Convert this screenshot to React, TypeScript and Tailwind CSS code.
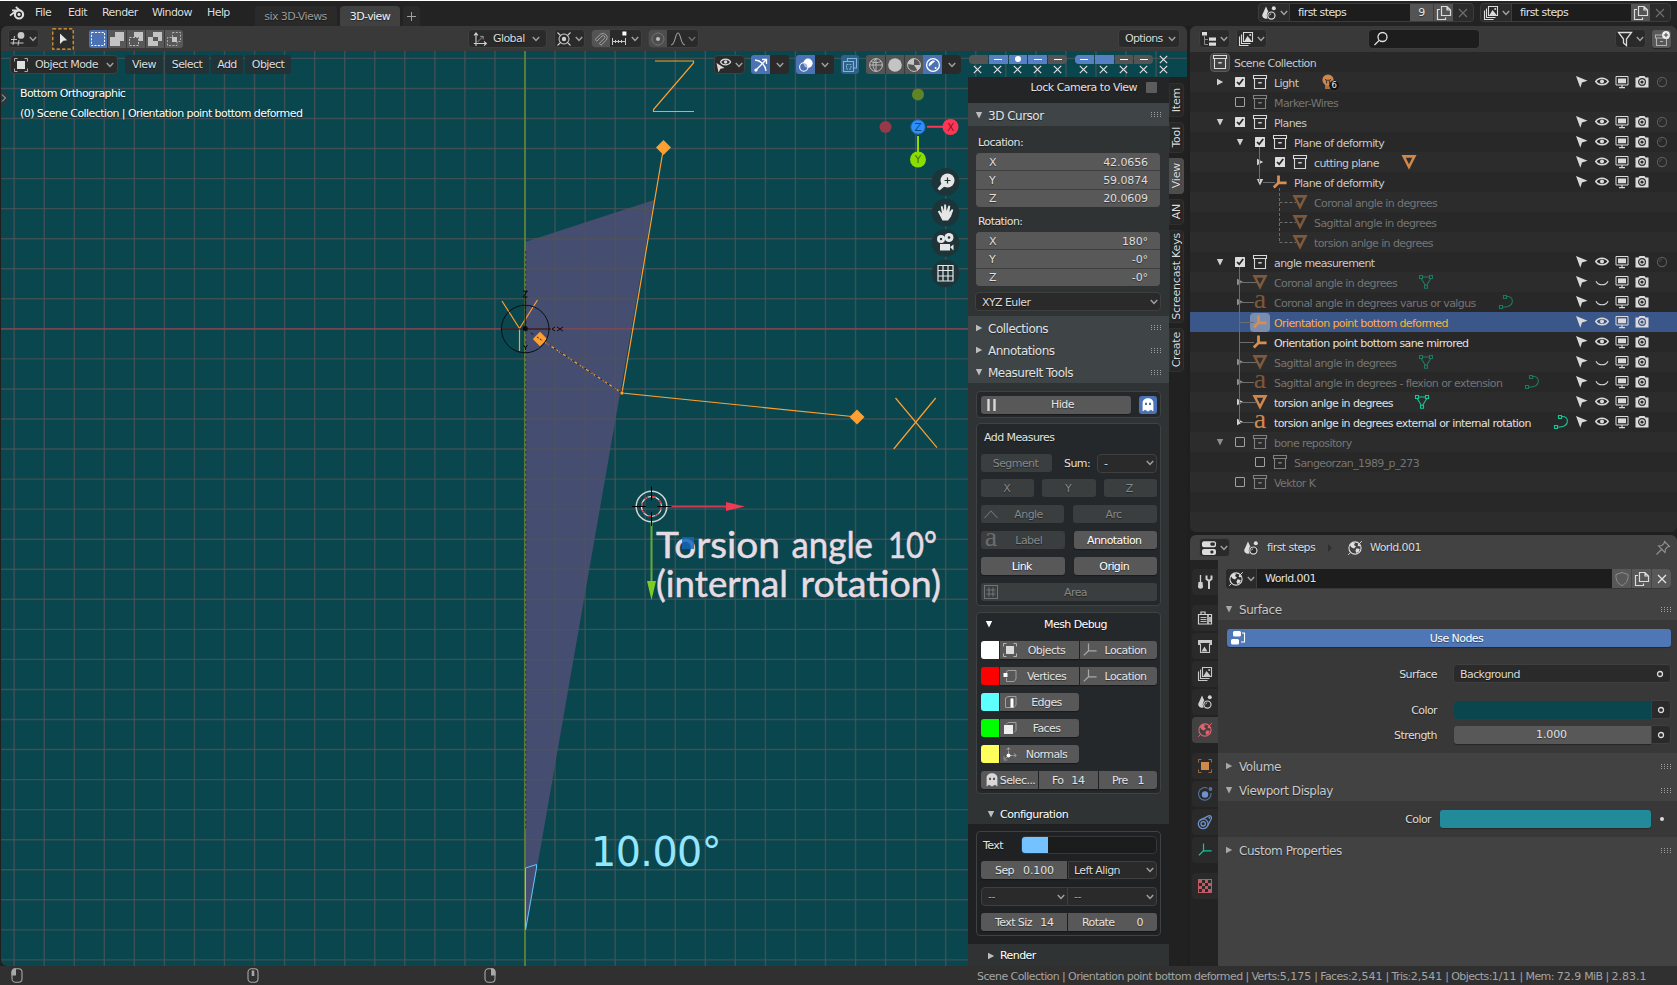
import React from "react";

type P = { children?: React.ReactNode; className?: string };

const SH = "[text-shadow:0_1px_1px_rgba(0,0,0,0.45)]";

const T = ({ children, className = "" }: P) => (
  <span className={`whitespace-pre pt-[2px] ${SH} ${className}`}>{children}</span>
);

/* ---------- icons ---------- */
type IP = { className?: string; children?: React.ReactNode; s?: number };
const Svg = ({ className = "", children, s = 16 }: IP) => (
  <svg width={s} height={s} viewBox="0 0 16 16" fill="none" stroke="currentColor" className={`shrink-0 ${className}`}>
    {children}
  </svg>
);
const Chev = ({ className = "text-[#a0a0a0]" }: IP) => (
  <svg width="8" height="6" viewBox="0 0 8 6" fill="none" stroke="currentColor" strokeWidth="1.5" className={`shrink-0 ${className}`}>
    <path d="M0.8 1L4 4.4L7.2 1" />
  </svg>
);
const Tri = ({ open = false, className = "text-[#bdbdbd]" }: { open?: boolean; className?: string }) => (
  <svg width="8" height="8" viewBox="0 0 8 8" fill="currentColor" className={`shrink-0 ${className}`}>
    {open ? <path d="M0.8 1H7.2L4 7.4Z" /> : <path d="M1 0.8V7.2L7.2 4Z" />}
  </svg>
);
const Collection = ({ className = "" }: IP) => (
  <Svg className={className}>
    <path d="M1.5 1.5H14.5V4.5H1.5ZM2.5 4.5V14.5H13.5V4.5" strokeWidth="1.1" />
    <path d="M6.3 8.8H9.7" strokeWidth="1.5" />
  </Svg>
);
const Cursor = ({ className = "" }: IP) => (
  <Svg className={className}><path d="M2 2L13.6 6.8L8 8.4L6.3 13.8Z" fill="currentColor" stroke="none" /></Svg>
);
const Eye = () => (
  <Svg>
    <path d="M1.8 7.5C4.5 3.2 11.5 3.2 14.2 7.5C11.5 11.8 4.5 11.8 1.8 7.5Z" strokeWidth="1.5" />
    <circle cx="8" cy="7.5" r="2" fill="currentColor" stroke="none" />
  </Svg>
);
const EyeClosed = () => (
  <Svg><path d="M2 7.2C4.5 12 11.5 12 14 7.2" strokeWidth="1.1" /></Svg>
);
const Monitor = () => (
  <Svg>
    <path d="M2 2.5H14V11H2Z" strokeWidth="1" />
    <path d="M4 4.4H12V9.2H4Z" fill="currentColor" stroke="none" />
    <path d="M8 11V13.4M5 13.6H11" strokeWidth="1.2" />
  </Svg>
);
const Camera = ({ hole = "#2b2b2b" }: { hole?: string }) => (
  <Svg>
    <path d="M1.5 3.5H4.5L5.5 2H10.5L11.5 3.5H14.5V13.5H1.5Z" fill="currentColor" stroke="none" />
    <circle cx="8" cy="8" r="3.4" stroke={hole} strokeWidth="1.2" fill="none" />
    <circle cx="8" cy="8" r="1.6" fill={hole} stroke="none" />
  </Svg>
);
const Ball = () => (
  <Svg className="text-[#5c5c5c]"><circle cx="8" cy="8" r="4.6" strokeWidth="1.1" /><path d="M5.6 8A2.4 2.4 0 0 1 8 5.6" strokeWidth="0.8" /></Svg>
);
const Check = ({ on = true }: { on?: boolean }) => (
  <Svg className={on ? "text-[#dcdcdc]" : "text-[#a2a2a2]"}>
    {on ? (
      <>
        <rect x="3" y="3" width="10" height="10" rx="0.6" fill="currentColor" stroke="none" />
        <path d="M5 8L7.2 10.2L11.2 5" stroke="#222" strokeWidth="1.7" />
      </>
    ) : (
      <rect x="3.5" y="3.5" width="9" height="9" rx="0.5" />
    )}
  </Svg>
);
const Axes = ({ className = "", w = 2.3 }: { className?: string; w?: number }) => (
  <Svg className={className}><path d="M6.5 1.5V8.8H14.6M6.5 8.8L1.8 13.4" strokeWidth={w} /></Svg>
);
const MeshObj = ({ className = "" }: IP) => (
  <Svg className={className}><path d="M2.6 2.4H13.4L8 13Z" strokeWidth="2.6" /></Svg>
);
const FontObj = ({ className = "" }: IP) => (
  <svg width="16" height="16" viewBox="0 0 16 16" className={`shrink-0 ${className}`}>
    <text x="8" y="14.3" textAnchor="middle" fill="currentColor" fontSize="28" fontFamily="Liberation Serif, serif" letterSpacing="0">a</text>
  </svg>
);
const MeshData = ({ className = "" }: IP) => (
  <Svg className={className}>
    <path d="M4 3H12M3 4.2L7.2 11M13 4.2L8.8 11" strokeWidth="1.1" />
    <path d="M1.5 1.5H4.5V4.5H1.5ZM11.5 1.5H14.5V4.5H11.5ZM6.5 11.2H9.5V14.2H6.5Z" strokeWidth="1.1" />
  </Svg>
);
const CurveData = ({ className = "" }: IP) => (
  <Svg className={className}>
    <path d="M5.5 1.5H8.5V4.5H5.5ZM1.5 11.5H4.5V14.5H1.5ZM8.5 2.5C12.5 2.1 14.4 4.500 14.400 7.100C14.400 10.600 12 13.300 4.800 13.300" strokeWidth="1.1" />
  </Svg>
);
const Bulb = () => (
  <svg width="20" height="16" viewBox="0 0 20 16" className="shrink-0">
    <circle cx="8" cy="6" r="5.6" fill="#d0874a" />
    <path d="M5.2 5L6.6 7V9.5M10.8 5L9.4 7V9.5M6.5 6.2H9.5" stroke="#333" strokeWidth="1" fill="none" />
    <path d="M5 12H11M5 14H10.5" stroke="#d0874a" strokeWidth="1.3" />
    <circle cx="14" cy="11.3" r="4.8" fill="#111" />
    <text x="14" y="14.4" textAnchor="middle" fontSize="8.5" fill="#eee" fontFamily="DejaVu Sans, sans-serif">6</text>
  </svg>
);
const SceneIcon = ({ className = "" }: IP) => (
  <Svg className={className}>
    <path d="M5 1.5L8.5 9.5C8.5 12 7 13.8 5 13.8C3 13.8 1.2 12.6 1.2 10Z" fill="currentColor" stroke="none" />
    <circle cx="10.4" cy="10.6" r="4.6" fill="#2b2b2b" stroke="none" />
    <circle cx="10.4" cy="10.6" r="3.6" strokeWidth="1.2" />
    <circle cx="12.8" cy="3.2" r="2" fill="currentColor" stroke="none" />
    <path d="M8.6 10.4A2 2 0 0 1 10.2 8.7" strokeWidth="0.8" />
  </Svg>
);
const LayersPic = ({ className = "" }: IP) => (
  <Svg className={className}>
    <path d="M5.5 1.5H14.5V10.5H5.5Z" strokeWidth="1.1" />
    <path d="M6.5 10L9.5 5L12 8L13.5 10Z" fill="currentColor" stroke="none" />
    <circle cx="12.2" cy="4" r="1" fill="currentColor" stroke="none" />
    <path d="M3.5 3.5V12.5H12.5M1.5 5.5V14.5H10.5" strokeWidth="1.1" />
  </Svg>
);
const Copy = ({ className = "text-[#dcdcdc]" }: IP) => (
  <Svg className={className}><path d="M5.5 1.5H11L14.5 5V10.5H5.5ZM11 1.5V5H14.5M4 4.5H1.5V14.5H9.5V12.500" strokeWidth="1.2" /></Svg>
);
const Cross = ({ className = "" }: IP) => (
  <Svg className={className}><path d="M4 4L12 12M12 4L4 12" strokeWidth="1.2" /></Svg>
);
const World = ({ className = "" }: IP) => (
  <Svg className={className}>
    <circle cx="8" cy="8" r="6.1" strokeWidth="1.1" />
    <path d="M2.8 5C4 3 6 2.4 8 3L7 5L9 6.4L7 8.6L4.6 7.4ZM9.6 8.2L12.8 9L11.6 12L9.4 13L8.4 10.4ZM11.4 3.6L13.4 5.6L12 6.6L10.6 5.4Z" fill="currentColor" stroke="none" />
    <path d="M12.2 3.8L14.8 1.2M1.2 14.8L3.4 12.6" strokeWidth="1" />
  </Svg>
);
const TreeIcon = () => (
  <Svg className="text-[#dcdcdc]">
    <path d="M1 1H6V4.6H1Z" fill="currentColor" stroke="none" />
    <path d="M3.5 5V13.5H7M3.5 8.5H7" strokeWidth="1" stroke="#8a8a8a" />
    <path d="M8 6.6H15V9.8H8ZM8 11.6H15V14.8H8Z" fill="currentColor" stroke="none" />
  </Svg>
);
const PropsIcon = () => (
  <Svg className="text-[#dcdcdc]">
    <rect x="1" y="1.2" width="14" height="6" rx="2" fill="currentColor" stroke="none" />
    <rect x="1" y="9" width="14" height="6" rx="2" fill="currentColor" stroke="none" />
    <rect x="9.4" y="2.6" width="4.4" height="3.2" rx="1" fill="#2b2b2b" stroke="none" />
    <rect x="9.4" y="10.4" width="3" height="3.2" rx="1" fill="#2b2b2b" stroke="none" />
  </Svg>
);
const ObjMode = ({ className = "text-[#dcdcdc]" }: IP) => (
  <Svg className={className}>
    <path d="M4 4H12V12H4Z" fill="currentColor" stroke="none" />
    <path d="M1.5 4.5V1.5H4.5M11.5 1.5H14.5V4.5M14.5 11.5V14.5H11.5M4.5 14.5H1.5V11.5" strokeWidth="1" opacity="0.7" />
  </Svg>
);
const Ghost = ({ className = "text-white", eye = "#4a70ae" }: { className?: string; eye?: string }) => (
  <Svg className={className}>
    <path d="M2.6 14.6V5.8C2.6 3 5 1.2 8 1.2S13.4 3 13.4 5.8V14.6L11 12.8L8 14.6L5 12.8Z" fill="currentColor" stroke="none" />
    <path d="M5 5.8H7V8H5ZM9 5.8H11V8H9Z" fill={eye} stroke="none" />
  </Svg>
);

/* ---------- small controls ---------- */
const Btn = ({ children, className = "" }: P) => (
  <div className={`flex h-[18px] items-center justify-center rounded-[3px] bg-[#585858] text-[#e3e3e3] shadow-[0_1px_1px_rgba(0,0,0,0.35)] ${className}`}>{children}</div>
);
const Dark = ({ children, className = "" }: P) => (
  <div className={`flex h-[19px] items-center rounded-[4px] border border-[#3f3f3f] bg-[#2a2a2a] text-[#dadada] ${className}`}>{children}</div>
);
const Grip = () => (
  <div className="mr-[8px] ml-auto grid grid-cols-4 gap-x-[2px] gap-y-px">
    {Array.from({ length: 12 }).map((_, i) => (
      <div key={i} className="size-px bg-[#a0a0a0]" />
    ))}
  </div>
);

/* ---------- top bar ---------- */
const IdBlock = ({ icon, users }: { icon: React.ReactNode; users?: string }) => (
  <div className="flex h-[19px] w-full items-stretch overflow-hidden rounded-[4px] border border-[#3d3d3d] bg-[#2b2b2b]">
    <div className="flex w-[31px] items-center justify-center gap-[3px] border-r border-[#3d3d3d] text-[#dcdcdc]">{icon}<Chev /></div>
    <div className="flex flex-1 items-center bg-[#1d1d1d] pl-[8px] text-[#e3e3e3]"><T>first steps</T></div>
    {users && <div className="flex w-[24px] items-center justify-center border-r border-[#3d3d3d] bg-[#545454] text-[#e3e3e3]"><T>{users}</T></div>}
    <div className="flex w-[19px] items-center justify-center bg-[#545454]"><Copy /></div>
    <div className="flex w-[20px] items-center justify-center"><Cross className="text-[#6d6d6d]" /></div>
  </div>
);

const TopBar = () => (
  <div className="flex h-[26px] border-t border-white bg-[#232323] pr-[6px] text-[#dedede]">
    <div className="flex h-[23px] items-center">
      <svg width="16" height="14" viewBox="0 0 16 14" fill="none" className="ml-[9px] text-[#dedede]">
        <path d="M1 9.6L7.8 4.2M3 4.4H9M6.8 1L11 4.4" stroke="currentColor" strokeWidth="1.8" />
        <circle cx="10" cy="8.4" r="4.1" stroke="currentColor" strokeWidth="2.2" />
        <circle cx="10" cy="8.4" r="1.6" fill="currentColor" />
      </svg>
      <T className="ml-[10px] w-[33px]">File</T>
      <T className="w-[34px]">Edit</T>
      <T className="w-[50px]">Render</T>
      <T className="w-[55px]">Window</T>
      <T className="w-[48px]">Help</T>
    </div>
    <div className="flex items-end gap-[3px]">
      <div className="flex h-[20px] w-[82px] items-center justify-center rounded-t-[4px] bg-[#2a2a2a] text-[#989898]"><T className="pr-[1px]">six 3D-Views</T></div>
      <div className="flex h-[20px] w-[60px] items-center justify-center rounded-t-[4px] bg-[#414141] text-[#f0f0f0]"><T>3D-view</T></div>
      <div className="flex h-[20px] w-[17px] items-center justify-center rounded-t-[4px] bg-[#2a2a2a] text-[#a0a0a0]">
        <svg width="9" height="9" viewBox="0 0 9 9" stroke="currentColor"><path d="M4.5 0V9M0 4.5H9" /></svg>
      </div>
    </div>
    <div className="ml-auto flex gap-[6px] pt-[2px]">
      <div className="flex w-[216px]"><IdBlock icon={<SceneIcon />} users="9" /></div>
      <div className="flex w-[191px]"><IdBlock icon={<LayersPic />} /></div>
    </div>
  </div>
);

/* ---------- viewport headers ---------- */
const ToolHeader = () => (
  <div className="flex h-[25px] items-center rounded-t-[6px] bg-[#393939] text-[#dadada]">
    <Dark className="ml-[7px] w-[31px] justify-center gap-[3px]">
      <Svg className="text-[#c8c8c8]">
        <path d="M4.5 5L3 14M9 9L8 14.5M1 8.5H7M0.5 12H13.5" strokeWidth="1" />
        <circle cx="11" cy="4.4" r="3.4" fill="currentColor" stroke="none" />
      </Svg>
      <Chev />
    </Dark>
    <svg width="22" height="22" viewBox="0 0 22 22" className="ml-[13px]">
      <rect x="0.8" y="0.8" width="20.4" height="20.4" fill="#2b2b2b" stroke="#f0a030" strokeWidth="1.2" strokeDasharray="3.4 2" />
      <path d="M8 5.5L15.2 12.2L11.3 12.7L8 16Z" fill="#e6e6e6" />
    </svg>
    <div className="ml-[15px] flex h-[18px] w-[94px] overflow-hidden rounded-[3px] bg-[#585858]">
      {[0, 1, 2, 3, 4].map((i) => (
        <div key={i} className={`flex flex-1 items-center justify-center ${i === 0 ? "bg-[#4a72b4]" : "border-l border-[#3a3a3a]"}`}>
          <Svg className="text-[#c4c4c4]">
            {i === 0 && <rect x="1.5" y="1.5" width="13" height="13" stroke="#fff" strokeDasharray="2 1.4" />}
            {i === 1 && <path d="M6 1H15V10H11V15H1V6H6Z" fill="currentColor" stroke="none" />}
            {i === 2 && <><path d="M6 1H15V10H11V6H6Z" fill="currentColor" stroke="none" /><path d="M1.5 6.5H10.5V14.5H1.5Z" strokeDasharray="2 1.4" /></>}
            {i === 3 && <path fillRule="evenodd" d="M6 1H15V10H11V15H1V6H6ZM6 6V10H11V6Z" fill="currentColor" stroke="none" />}
            {i === 4 && <><path d="M6 6H11V11H6Z" fill="currentColor" stroke="none" /><path d="M6.5 1.5H14.5V10.5H11V14.5H1.5V6.5H6.5Z" strokeDasharray="2 1.4" opacity="0.8" /></>}
          </Svg>
        </div>
      ))}
    </div>
    <Dark className="ml-[285px] w-[79px] pr-[6px] pl-[3px]">
      <Svg className="text-[#d0d0d0]">
        <path d="M4 12L4 2.5M2 4.5L4 2L6 4.5M4 12.5H14M12 10.5L14.4 12.5L12 14.6M1.8 12.5H4V15" strokeWidth="1.1" />
        <path d="M5.5 11L11 5.5M8 5.4H11.2V8.5" strokeWidth="1" opacity="0.6" />
      </Svg>
      <T className="mr-[6px] ml-[5px] flex-1">Global</T>
      <Chev />
    </Dark>
    <Dark className="ml-[7px] w-[31px] justify-center gap-[3px]">
      <Svg className="text-[#d0d0d0]">
        <circle cx="8" cy="8" r="5" strokeWidth="1" /><circle cx="8" cy="8" r="2.2" fill="currentColor" stroke="none" />
        <path d="M1.5 1.5L5 5M14.5 1.5L11 5M1.5 14.5L5 11M14.5 14.5L11 11" strokeWidth="1.1" />
      </Svg>
      <Chev />
    </Dark>
    <Dark className="ml-[6px] w-[51px] overflow-hidden pr-[2px]">
      <div className="flex h-full w-[18px] shrink-0 items-center justify-center bg-[#545454]">
        <Svg className="text-[#a0a0a0]"><path d="M2 8.5L7.5 3.2A4.2 4.2 0 0 1 13.4 9L8 14.2L6.3 12.4L11.4 7.4A1.7 1.7 0 0 0 9 5L3.8 10.2Z" strokeWidth="1" /></Svg>
      </div>
      <Svg className="mr-auto ml-px text-[#c8c8c8]"><path d="M1.5 7V14M14.5 7V14M1.5 10.5H14.5M4.5 9V12M7.5 9V12M10.5 9V12" strokeWidth="1" /><rect x="11.4" y="0.5" width="4" height="4" fill="#fff" stroke="none" /></Svg>
      <Chev />
    </Dark>
    <Dark className="ml-[6px] w-[51px] overflow-hidden pr-[2px]">
      <div className="flex h-full w-[18px] shrink-0 items-center justify-center bg-[#4d4d4d]">
        <Svg className="text-[#757575]"><circle cx="8" cy="8" r="6" strokeWidth="1" /><circle cx="8" cy="8" r="2" fill="#c0c0c0" stroke="none" /></Svg>
      </div>
      <Svg className="mr-auto ml-[3px] text-[#9a9a9a]"><path d="M1 14C5.5 14 5 2 8 2S10.500 14 15 14" strokeWidth="1.1" /></Svg>
      <Chev className="text-[#6c6c6c]" />
    </Dark>
    <Dark className="mr-[7px] ml-auto w-[62px] justify-between pr-[3px] pl-[6px]"><T className="tracking-[-0.700px]">Options</T><Chev /></Dark>
  </div>
);

const MenuBtn = ({ children, className = "" }: P) => (
  <div className={`flex h-[19px] items-center justify-center rounded-[3px] bg-[#243135]/90 text-[#dedede] ${className}`}><T>{children}</T></div>
);

const Split = ({ icon, active = true }: { icon: React.ReactNode; active?: boolean }) => (
  <div className="flex h-[19px] w-[38px] items-center overflow-hidden rounded-[3px] bg-[#2a2a2a]">
    <div className={`flex h-full w-[19px] items-center justify-center ${active ? "bg-[#4a72b4] text-white" : ""}`}>{icon}</div>
    <div className="flex flex-1 justify-center"><Chev /></div>
  </div>
);

const ViewHeader = () => (
  <div className="flex h-[26px] items-center pt-px pl-[9px]">
    <Dark className="w-[108px] pr-[3px] pl-[2px]"><ObjMode className="text-[#e0e0e0]" /><T className="mx-[6px] flex-1">Object Mode</T><Chev /></Dark>
    <MenuBtn className="ml-[7px] w-[38px]">View</MenuBtn>
    <MenuBtn className="ml-[2px] w-[44px]">Select</MenuBtn>
    <MenuBtn className="ml-[2px] w-[32px]">Add</MenuBtn>
    <MenuBtn className="ml-[2px] w-[46px]">Object</MenuBtn>
    <Dark className="ml-[423px] w-[31px] justify-center gap-[3px]">
      <Svg className="text-[#d8d8d8]">
        <path d="M4.5 5C6.500 1.200 12.500 1.200 14.700 5C12.500 8.800 6.500 8.800 4.500 5Z" strokeWidth="1.2" /><circle cx="9.600" cy="5" r="1.700" fill="currentColor" stroke="none" />
        <path d="M0.500 6L8.500 11L4.500 11.700L2.500 15.500Z" fill="currentColor" stroke="none" />
      </Svg>
      <Chev />
    </Dark>
    <div className="ml-[6px]"><Split icon={<Svg><path d="M2 3C8 3.500 12.500 8 13 14M2 14L13 3M9 2.500H13.500V7" strokeWidth="1.3" /><circle cx="3" cy="13" r="1.6" fill="currentColor" stroke="none" /></Svg>} /></div>
    <div className="ml-[7px]"><Split icon={<Svg><circle cx="10" cy="6.200" r="4.600" fill="currentColor" stroke="none" /><circle cx="5.800" cy="10" r="4.200" strokeWidth="1.1" fill="#4a72b4" fillOpacity="0.5" /></Svg>} /></div>
    <div className="ml-[7px] flex h-[19px] w-[18px] items-center justify-center rounded-[3px] bg-[#2f6088] text-[#7fb4de]">
      <Svg><path d="M5.500 4.500V1.500H14.500V11H12M1.500 4.500H11.500V14.500H1.500Z" strokeWidth="1.1" /><path d="M4.500 7.500H9V12H4.500Z" strokeDasharray="2 1" strokeWidth="1" /></Svg>
    </div>
    <div className="ml-[7px] flex h-[19px] w-[95px] overflow-hidden rounded-[3px] bg-[#545454] text-[#c4c4c4]">
      <div className="flex w-[19px] items-center justify-center"><Svg><circle cx="8" cy="8" r="6.400" /><path d="M1.600 8H14.400M8 1.600V14.400M3 4.500C6 6 10 6 13 4.500M8 1.600C4 5 4 11 8 14.400" strokeWidth="0.900" /></Svg></div>
      <div className="flex w-[19px] items-center justify-center border-l border-[#3a3a3a]"><Svg><circle cx="8" cy="8" r="6.800" fill="currentColor" stroke="none" /></Svg></div>
      <div className="flex w-[19px] items-center justify-center border-l border-[#3a3a3a]"><Svg><circle cx="8" cy="8" r="6.400" /><path d="M8 1.500V8H14.500A6.500 6.500 0 0 1 11.500 13.500L8 8L1.500 7A6.500 6.500 0 0 1 8 1.500Z" fill="currentColor" stroke="none" /></Svg></div>
      <div className="flex w-[19px] items-center justify-center bg-[#4a72b4] text-white"><Svg><circle cx="8" cy="8" r="6.400" strokeWidth="1.300" /><path d="M4.200 9A4.500 4.500 0 0 1 9.500 4L7 6.500Z" fill="currentColor" /><circle cx="10.600" cy="11" r="1" fill="currentColor" stroke="none" /></Svg></div>
      <div className="flex w-[19px] items-center justify-center bg-[#2a2a2a]"><Chev /></div>
    </div>
  </div>
);

/* ---------- layer switches ---------- */
const Seg = ({ on, mark }: { on?: boolean; mark?: "dash" | "dot" }) => (
  <div className={`flex h-[9px] flex-1 items-center justify-center ${on ? "bg-[#5680c2]" : "bg-[#545454]"}`}>
    {mark === "dash" && <div className="h-px w-[8px] bg-white" />}
    {mark === "dot" && <div className="size-[6px] rounded-full bg-white" />}
  </div>
);
const XMark = () => (
  <svg width="9" height="9" viewBox="0 0 9 9" stroke="#e6e6e6" strokeWidth="1.1"><path d="M0.800 0.800L8.200 8.200M8.200 0.800L0.800 8.200" /></svg>
);
const Layers = () => (
  <div className="flex h-[26px] shrink-0 flex-col pt-[3px] pl-px">
    <div className="flex h-[10px] items-center">
      <div className="flex w-[98px] gap-px overflow-hidden rounded-[4px]"><Seg /><Seg on mark="dash" /><Seg on mark="dot" /><Seg on mark="dash" /><Seg mark="dash" /></div>
      <div className="ml-[8px] flex w-[78px] gap-px overflow-hidden rounded-[4px]"><Seg on mark="dash" /><Seg on /><Seg mark="dash" /><Seg mark="dash" /></div>
      <div className="ml-[6px] pt-px"><XMark /></div>
    </div>
    <div className="mt-px ml-[4px] flex items-center">
      <div className="flex gap-[11px]">{[0, 1, 2, 3, 4].map((i) => <XMark key={i} />)}</div>
      <div className="ml-[17px] flex gap-[11px]">{[0, 1, 2, 3, 4].map((i) => <XMark key={i} />)}</div>
    </div>
  </div>
);

/* ---------- sidebar ---------- */
const SideHead = ({ children, open = false, className = "" }: P & { open?: boolean }) => (
  <div className={`flex h-[22px] items-center bg-[#3f4547] pl-[7px] text-[12px] text-[#e2e2e2] ${className}`}>
    <Tri open={open} /><T className="ml-[5px] tracking-[-0.5px]">{children}</T><Grip />
  </div>
);
const NumStack = ({ rows }: { rows: [string, string][] }) => (
  <div className="mr-[9px] ml-[8px] grid h-[54px] grid-rows-3 gap-px overflow-hidden rounded-[4px] bg-[#3e3e3e]">
    {rows.map(([a, b]) => (
      <div key={a} className="flex min-h-0 items-center justify-between bg-[#585858] pr-[12px] pl-[13px] leading-[14px] text-[#dedede]">
        <T>{a}</T><T className="tracking-[-0.1px]">{b}</T>
      </div>
    ))}
  </div>
);
const Box = ({ children, className = "" }: P) => (
  <div className={`mr-[8px] ml-[8px] flex flex-col rounded-[4px] border border-[#3e4243] bg-[#25282a] pr-[3px] pl-[4px] ${className}`}>{children}</div>
);
const Off = ({ children, className = "" }: P) => (
  <Btn className={`bg-[#3b3e3f]! text-[#85888a]! shadow-none ${className}`}>{children}</Btn>
);
const DebugRow = ({ color, icon, name, loc = false }: { color: string; icon: React.ReactNode; name: string; loc?: boolean }) => (
  <div className="mb-[8px] flex h-[18px] gap-px">
    <div className={`w-[18px] rounded-l-[3px] ${color}`} />
    <Btn className={`w-[79px] justify-start! pr-[4px] pl-[2px] ${loc ? "rounded-none!" : "rounded-l-none!"}`}>{icon}<T className="flex-1 text-center">{name}</T></Btn>
    {loc && <Btn className="flex-1 rounded-l-none! pr-[4px] pl-[2px]"><Axes w={1.2} className="text-[#a8a8a8]" /><T className="flex-1 text-center">Location</T></Btn>}
  </div>
);

const SideTab = ({ children, className = "", active = false }: P & { active?: boolean }) => (
  <div className={`flex w-[15px] items-center justify-center rounded-r-[4px] ${active ? "bg-[#4d4d4d]" : "border border-[#303030] bg-[#272727]"} text-[#dcdcdc] ${className}`}>
    <span className={`rotate-180 whitespace-pre text-[11px] leading-[13px] tracking-[-0.200px] [writing-mode:vertical-rl] ${SH}`}>{children}</span>
  </div>
);

const Sidebar = () => (
  <div className="flex w-[201px] flex-col bg-[#303334] text-[#e2e2e2] [&>*]:shrink-0">
    <div className="flex h-[26px] items-center justify-end bg-[#232526] pr-[12px] pb-[5px]">
      <T className="tracking-[-0.500px]">Lock Camera to View</T><div className="ml-[9px] size-[11px] rounded-[1px] bg-[#5c5c5c]" />
    </div>
    <SideHead open className="h-[23px]!">3D Cursor</SideHead>
    <T className="mt-[9px] ml-[10px] h-[14px] leading-[12px]">Location:</T>
    <div className="h-[4px]" />
    <NumStack rows={[["X", "42.0656"], ["Y", "59.0874"], ["Z", "20.0609"]]} />
    <T className="mt-[7px] ml-[10px] h-[14px] leading-[12px]">Rotation:</T>
    <div className="h-[4px]" />
    <NumStack rows={[["X", "180°"], ["Y", "-0°"], ["Z", "-0°"]]} />
    <Dark className="mt-[6px] mr-[8px] ml-[7px] justify-between pr-[2px] pl-[6px] leading-[14px]"><T>XYZ Euler</T><Chev /></Dark>
    <div className="h-[5px]" />
    <SideHead className="h-[23px]!">Collections</SideHead>
    <SideHead>Annotations</SideHead>
    <SideHead open>MeasureIt Tools</SideHead>

    <Box className="mt-[8px] h-[27px] flex-row! items-center">
      <Btn className="w-[150px]">
        <svg width="10" height="12" viewBox="0 0 10 12" className="ml-[6px]"><path d="M1.500 0V12M7.500 0V12" stroke="#d8d8d8" strokeWidth="2.400" /></svg>
        <T className="flex-1 pr-[3px] text-center">Hide</T>
      </Btn>
      <div className="ml-[8px] flex size-[18px] items-center justify-center rounded-[3px] bg-[#4a72b4]"><Ghost /></div>
    </Box>

    <Box className="mt-[5px] h-[183px]">
      <T className="mt-[5px] ml-[3px] h-[15px] leading-[13px]">Add Measures</T>
      <div className="mt-[10px] flex h-[18px] items-center">
        <Off className="w-[71px] pr-[2px]"><T>Segment</T></Off><T className="ml-[12px]">Sum:</T>
        <Dark className="ml-auto w-[60px] justify-between pr-[2px] pl-[6px]"><T>-</T><Chev /></Dark>
      </div>
      <div className="mt-[7px] flex gap-[8px]"><Off className="flex-1 pr-[2px]"><T>X</T></Off><Off className="flex-1 pr-[2px]"><T>Y</T></Off><Off className="flex-1 pr-[2px]"><T>Z</T></Off></div>
      <div className="mt-[8px] flex gap-[9px]">
        <Off className="flex-1 pl-[2px]"><Svg className="text-[#707374]"><path d="M1.500 12L8 5L14.500 12" strokeWidth="1.100" /></Svg><T className="flex-1 pr-[6px] text-center">Angle</T></Off><Off className="flex-1 pr-[3px]"><T>Arc</T></Off>
      </div>
      <div className="mt-[8px] flex gap-[9px]">
        <Off className="flex-1 pl-[2px]"><FontObj className="text-[#6a6d6e]" /><T className="flex-1 pr-[6px] text-center">Label</T></Off><Btn className="flex-1 pr-[2px] text-white!"><T>Annotation</T></Btn>
      </div>
      <div className="mt-[8px] flex gap-[9px] text-white"><Btn className="flex-1 pr-[2px] text-white!"><T>Link</T></Btn><Btn className="flex-1 pr-[2px] text-white!"><T>Origin</T></Btn></div>
      <div className="mt-[8px] flex">
        <Off className="flex-1 pl-[2px]"><Svg className="text-[#707374]"><path d="M1.500 1.500H14.500V14.500H1.500ZM6 3.500V12.500M10 3.500V12.500M3.500 6H12.500M3.500 10H12.500" strokeWidth="1.100" /></Svg><T className="flex-1 pr-[5px] text-center">Area</T></Off>
      </div>
    </Box>

    <Box className="mt-[6px] h-[182px]">
      <div className="mt-[4px] mb-[10px] flex h-[14px] items-center pl-[4px] text-white"><Tri open className="text-white" /><T className="flex-1 pl-[1px] text-center">Mesh Debug</T></div>
      <DebugRow color="bg-white" name="Objects" icon={<ObjMode />} loc />
      <DebugRow color="bg-[#ff0000]" name="Vertices" icon={<Svg className="text-[#a0a0a0]"><path d="M4.500 8V3.500L6 2.500H14V11L12 13.500H4.500V10" strokeWidth="1" /><rect x="1.500" y="5" width="4" height="4" fill="#fff" stroke="none" /></Svg>} loc />
      <DebugRow color="bg-[#5effff]" name="Edges" icon={<Svg className="text-[#a0a0a0]"><path d="M3.500 13.500V4L6 2.500H14V11L12 13.500ZM10 13.500V4.500" strokeWidth="1" /><rect x="8.500" y="4.500" width="3" height="9" fill="#fff" stroke="none" /></Svg>} />
      <DebugRow color="bg-[#00ff00]" name="Faces" icon={<Svg className="text-[#a0a0a0]"><path d="M4 4.500L6 2.500H14V10.500L12 12.500" strokeWidth="1" /><rect x="2" y="5" width="9" height="9" fill="#eee" stroke="none" /></Svg>} />
      <DebugRow color="bg-[#ffff5c]" name="Normals" icon={<Svg className="text-[#a0a0a0]"><path d="M6.500 7.500V2M4.500 4L6.500 1.500L8.500 4M8 9.500H14M12 7.500L14.500 9.500L12 11.500M5 11L2.500 13.500M2 10.500V14H5.500" strokeWidth="1" strokeDasharray="2.500 0.700" /><circle cx="6.500" cy="9.500" r="1.900" fill="#fff" stroke="none" /></Svg>} />
      <div className="flex gap-px">
        <Btn className="w-[57px] rounded-r-none!"><Ghost className="text-[#d8d8d8]" eye="#585858" /><T>Selec...</T></Btn>
        <Btn className="w-[59px] justify-between! rounded-none! pr-[13px] pl-[13px]"><T>Fo</T><T className="tracking-[-0.100px]">14</T></Btn>
        <Btn className="flex-1 justify-between! rounded-l-none! pr-[13px] pl-[13px]"><T>Pre</T><T>1</T></Btn>
      </div>
    </Box>
    <div className="mt-[10px] flex h-[20px] items-center pl-[19px] text-white"><Tri open /><T className="ml-[5px] tracking-[-0.500px]">Configuration</T></div>
    <div className="h-[120px] bg-[#1f2122] pt-[7px]">
      <Box className="h-[105px] bg-[#1f2122]!">
        <div className="mt-[4px] flex h-[18px] items-center"><T className="ml-[2px] w-[38px]">Text</T>
          <div className="flex h-[18px] flex-1 overflow-hidden rounded-[4px] border border-[#353738] bg-[#1b1c1c]"><div className="w-[26px] bg-[#74c2ff]" /></div>
        </div>
        <div className="mt-[7px] flex gap-px"><Btn className="w-[86px] justify-between! rounded-r-none! pr-[13px] pl-[14px]"><T>Sep</T><T className="tracking-[-0.1px]">0.100</T></Btn>
          <Dark className="h-[18px]! flex-1 justify-between rounded-l-none! pr-[2px] pl-[5px]"><T>Left Align</T><Chev /></Dark></div>
        <div className="mt-[8px] flex"><Dark className="w-[87px] justify-between rounded-r-none! pr-[2px] pl-[6px] text-[#a0a0a0]!"><T>--</T><Chev /></Dark>
          <Dark className="flex-1 justify-between rounded-l-none! border-l-0! pr-[2px] pl-[6px] text-[#a0a0a0]!"><T>--</T><Chev /></Dark></div>
        <div className="mt-[7px] flex gap-px"><Btn className="w-[86px] justify-between! rounded-r-none! pr-[13px] pl-[14px]"><T>Text Siz</T><T className="tracking-[-0.100px]">14</T></Btn>
          <Btn className="flex-1 justify-between! rounded-l-none! pr-[14px] pl-[14px]"><T>Rotate</T><T>0</T></Btn></div>
      </Box>
    </div>
    <div className="flex h-[21px] items-center pt-[2px] pl-[19px] text-white"><Tri /><T className="ml-[5px]">Render</T></div>
  </div>
);

/* ---------- 3D scene ---------- */
const O = "#ff9f30";
const words: [string, number, number, number][] = [
  ["Torsion", 655, 506.8, 124],
  ["angle", 790.5, 506.8, 81.5],
  ["10°", 887, 506.8, 49],
  ["(internal", 655, 546, 132],
  ["rotation)", 799.500, 546, 140.500],
];
const Scene = () => {
  const v = Array.from({ length: 39 }).map((_, i) => 13.150 + i * 30.050);
  const h = Array.from({ length: 31 }).map((_, i) => 7.400 + i * 30.050);
  const diamond = (x: number, y: number, r: number) => <path d={`M${x} ${y - r}L${x + r} ${y}L${x} ${y + r}L${x - r} ${y}Z`} fill={O} />;
  return (
    <svg width="1186" height="915" viewBox="0 0 1186 915" fill="none" className="absolute inset-0">
      <rect width="1186" height="915" fill="#0a464d" />
      <path d="M524 191L652.900 149L525 880Z" fill="#454d70" />
      <g stroke="#525459" strokeOpacity="0.720" strokeWidth="1.400">
        {v.map((x) => <path key={x} d={`M${x} 0V915`} />)}
        {h.map((y) => <path key={y} d={`M0 ${y}H1186`} />)}
      </g>
      <path d="M0 277.900H1186" stroke="#8a4452" strokeWidth="1.400" />
      <path d="M524 0V915" stroke="#5b8236" strokeWidth="1.800" />
      <path d="M524.800 200V780" stroke="#2c3434" strokeDasharray="2.500 2.500" />
      <g stroke={O} strokeWidth="1.200">
        <path d="M654 10H692.500V12L652.500 58.500V60.500H693" />
        <path d="M662.500 97L621 342L856 366" />
        <path d="M501 250L518.500 277.500L536.500 249M518.500 277.500V300" />
        <path d="M894.500 347L936 396.700M934.700 347L892.700 398" />
        <path d="M539 288L621 342" strokeDasharray="3 1.600" />
      </g>
      <path d="M524 278L621 342" stroke="#111" strokeWidth="0.900" strokeDasharray="3 4" />
      {diamond(662.500, 96.500, 7.500)}
      {diamond(856, 366, 7.500)}
      {diamond(539, 288, 7.200)}
      <path d="M536 286L542 290" stroke="#222" strokeDasharray="2 1.500" />
      <circle cx="621" cy="342" r="2" fill={O} stroke="#222" strokeWidth="0.500" />
      <g stroke="#0b0d12" strokeWidth="1">
        <circle cx="524.200" cy="278" r="23.800" />
        <path d="M500 278H550M554 276L551 278L554 280M556 276L562 280M562 276L556 280M524.200 240V278M522 240H526.500L522 246H526.500M522.500 294L524.500 297L526.500 294M524.500 297V299" />
      </g>
      <circle cx="524.200" cy="277.500" r="2.500" fill="#0b0d12" />
      <path d="M650.500 470V532" stroke="#68a83a" strokeWidth="2" />
      <path d="M646 530H655L650.500 549Z" fill="#7ecb22" />
      <path d="M666 455.500H726" stroke="#cf3a50" strokeWidth="1.800" />
      <path d="M725 451V460L744 455.500Z" fill="#ee3a52" />
      <circle cx="650.500" cy="455.500" r="15.300" stroke="#cfd4d2" strokeWidth="1.500" />
      <circle cx="650.500" cy="455.500" r="10" stroke="#f0e8e8" strokeWidth="1.200" />
      <circle cx="650.500" cy="455.500" r="10" stroke="#e02030" strokeWidth="1.200" strokeDasharray="3.930 3.930" />
      <path d="M631 455.500H645M656 455.500H670.500M650.500 435.500V449.500M650.500 461V475" stroke="#000" />
      {words.map(([w, x, y, len]) => (
        <text key={w} x={x} y={y} textLength={len} lengthAdjust="spacingAndGlyphs" fontFamily="Lato, sans-serif" fontSize="36.500" letterSpacing="0" fill="#e6dbe2" stroke="#e6dbe2" strokeWidth="0.500">{w}</text>
      ))}
      <rect x="681" y="486" width="12" height="12" fill="#1466b8" fillOpacity="0.850" />
      <path d="M524.500 817L535.500 813.500V817L524.500 879Z" stroke="#5cc8ff" strokeWidth="1" />
      <text x="590" y="815" textLength="130" lengthAdjust="spacingAndGlyphs" fontFamily="DejaVu Sans, sans-serif" fontSize="41" fill="#93e6ff">10.00°</text>

      <g>
        <circle cx="917" cy="43.500" r="6" fill="#5f8427" />
        <circle cx="884.500" cy="76" r="6" fill="#963a49" />
        <path d="M926 75.800H942" stroke="#ff3653" strokeWidth="2" />
        <path d="M917 85V101" stroke="#8bdc00" strokeWidth="2" />
        <circle cx="917" cy="76" r="7.200" fill="#2d8ffb" stroke="#2564a8" />
        <circle cx="949.500" cy="76" r="8" fill="#ff3653" />
        <circle cx="917" cy="108.500" r="8" fill="#8bdc00" />
        <g fontFamily="DejaVu Sans, sans-serif" fontSize="10.500" textAnchor="middle" fillOpacity="0.650" letterSpacing="0">
          <text x="917" y="79.900" fill="#001a40">Z</text><text x="949.500" y="79.900" fill="#300010">X</text><text x="917" y="112.400" fill="#203000">Y</text>
        </g>
        {[131, 161.500, 192, 222.500].map((y) => <circle key={y} cx="944.500" cy={y} r="13.800" fill="#1d3439" />)}
        <g fill="#e6e6e6" stroke="none">
          <circle cx="946.500" cy="129.500" r="7" /><path d="M941 132L936.500 137.500L938.500 139.500L944 135Z" />
          <path d="M946.500 126.500V132.500M943.500 129.500H949.500" stroke="#1d3439" strokeWidth="1.200" />
          <path d="M936.800 160.500L938.500 159.500L941 162.500L939.800 155.500L941.400 155L943 160L943.200 153.500H945L945.500 160L947.500 154.500L949.200 155L948.500 161L951 158L952.300 159L950 165.500L947 169.500H941.500Z" strokeLinejoin="round" />
          <circle cx="940" cy="188" r="4" /><circle cx="948" cy="186.500" r="4.500" />
          <path d="M939 193H949V199.500H939ZM949 196L952.500 193.500V199.500Z" />
          <g fill="#1d3439"><circle cx="940" cy="188" r="1.200" /><circle cx="948" cy="186.500" r="1.300" /></g>
        </g>
        <path d="M937 214.500H952V230H937ZM942 214.500V230M947 214.500V230M937 219.500H952M937 225H952" stroke="#e6e6e6" strokeWidth="1.200" />
      </g>
      <path d="M0 40.500H1A5 5 0 0 1 6 45V50A5 5 0 0 1 1 54.500H0Z" fill="#283a3e" />
      <path d="M1 43.500L4.500 47L1 50.500" stroke="#c0c0c0" />
    </svg>
  );
};

const Viewport = () => (
  <div className="flex w-[1186px] shrink-0 flex-col">
    <ToolHeader />
    <div className="relative flex flex-1 overflow-hidden rounded-bl-[6px]">
      <Scene />
      <div className="relative flex w-[967px] shrink-0 flex-col">
        <ViewHeader />
        <div className="ml-[19px] flex flex-col pt-[6px] text-white">
          <T className="leading-[18px]">Bottom Orthographic</T>
          <T className="leading-[18px]">(0) Scene Collection | Orientation point bottom deformed</T>
        </div>
      </div>
      <div className="relative flex flex-1 flex-col">
        <Layers />
        <div className="flex flex-1">
          <Sidebar />
          <div className="flex flex-1 flex-col bg-[#212121] pt-[6px]">
            <SideTab className="h-[34px]">Item</SideTab>
            <SideTab className="mt-[5px] h-[31px]">Tool</SideTab>
            <SideTab active className="mt-[5px] h-[36px]">View</SideTab>
            <SideTab className="mt-[5px] h-[26px]">AN</SideTab>
            <SideTab className="mt-[5px] h-[93px]">Screencast Keys</SideTab>
            <SideTab className="mt-[5px] h-[44px]">Create</SideTab>
          </div>
        </div>
      </div>
    </div>
  </div>
);

/* ---------- outliner ---------- */
type Row = {
  d: number; name: string; tri?: "open" | "shut"; check?: boolean; icon: "col" | "mesh" | "font" | "axes";
  dim?: boolean; sel?: boolean; data?: "mesh" | "curve" | "bulb" | "obj"; eye?: "on" | "off"; ball?: boolean; bright?: boolean;
};
const rows: Row[] = [
  { d: 1, name: "Light", tri: "shut", check: true, icon: "col", data: "bulb", eye: "on", ball: true },
  { d: 1, name: "Marker-Wires", check: false, icon: "col", dim: true },
  { d: 1, name: "Planes", tri: "open", check: true, icon: "col", eye: "on", ball: true },
  { d: 2, name: "Plane of deformity", tri: "open", check: true, icon: "col", eye: "on", ball: true },
  { d: 3, name: "cutting plane", tri: "shut", check: true, icon: "col", data: "obj", eye: "on", ball: true },
  { d: 3, name: "Plane of deformity", tri: "open", icon: "axes", eye: "on" },
  { d: 4, name: "Coronal angle in degrees", icon: "mesh", dim: true },
  { d: 4, name: "Sagittal angle in degrees", icon: "mesh", dim: true },
  { d: 4, name: "torsion anlge in degrees", icon: "mesh", dim: true },
  { d: 1, name: "angle measurement", tri: "open", check: true, icon: "col", eye: "on", ball: true },
  { d: 2, name: "Coronal angle in degrees", tri: "shut", icon: "mesh", dim: true, data: "mesh", eye: "off" },
  { d: 2, name: "Coronal angle in degrees varus or valgus", tri: "shut", icon: "font", dim: true, data: "curve", eye: "off" },
  { d: 2, name: "Orientation point bottom deformed", icon: "axes", sel: true, eye: "on" },
  { d: 2, name: "Orientation point bottom sane mirrored", icon: "axes", bright: true, eye: "on" },
  { d: 2, name: "Sagittal angle in degrees", tri: "shut", icon: "mesh", dim: true, data: "mesh", eye: "off" },
  { d: 2, name: "Sagittal angle in degrees - flexion or extension", tri: "shut", icon: "font", dim: true, data: "curve", eye: "off" },
  { d: 2, name: "torsion anlge in degrees", tri: "shut", icon: "mesh", bright: true, data: "mesh", eye: "on" },
  { d: 2, name: "torsion anlge in degrees external or internal rotation", tri: "shut", icon: "font", bright: true, data: "curve", eye: "on" },
  { d: 1, name: "bone repository", tri: "open", check: false, icon: "col", dim: true },
  { d: 2, name: "Sangeorzan_1989_p_273", check: false, icon: "col", dim: true },
  { d: 1, name: "Vektor K", check: false, icon: "col", dim: true },
];

const RowView = ({ r, i }: { r: Row; i: number }) => {
  const pad = ["pl-[20px]", "pl-[20px]", "pl-[40px]", "pl-[60px]", "pl-[80px]"][r.d];
  const obj = r.check === undefined;
  const objPad = ["", "", "pl-[40px]", "pl-[60px]", "pl-[80px]"][r.d];
  const tint = r.dim ? "opacity-50" : "";
  return (
    <div className={`flex h-[20px] items-center text-[#c8c8c8] ${r.sel ? "bg-[#3b5689]" : i % 2 ? "bg-[#282828]" : "bg-[#2c2c2c]"} ${obj ? objPad : pad}`}>
      <div className={`flex w-[20px] shrink-0 justify-center ${r.dim ? "opacity-60" : ""}`}>{r.tri && <Tri open={r.tri === "open"} className="text-[#d0d0d0]" />}</div>
      {!obj && <div className="flex w-[20px] justify-center"><Check on={r.check} /></div>}
      <div className={`flex h-[19px] w-[20px] shrink-0 items-center justify-center rounded-[4px] ${r.sel ? "bg-[#7a8cb0]" : ""}`}>
        {r.icon === "col" && <Collection className={r.dim ? "text-[#808080]" : "text-[#d8d8d8]"} />}
        {r.icon === "mesh" && <MeshObj className={`text-[#d0874a] ${tint}`} />}
        {r.icon === "font" && <FontObj className={`text-[#d0874a] ${tint}`} />}
        {r.icon === "axes" && <Axes w={2.800} className="text-[#d88d50]" />}
      </div>
      <span className={`ml-[4px] whitespace-pre pt-[4px] leading-[16px] tracking-[-0.600px] ${r.dim ? "text-[#757575]" : r.sel ? "text-[#ffaf3a]" : r.bright ? "text-[#e0e0e0]" : ""}`}>{r.name}</span>
      {r.data === "mesh" && <MeshData className={`ml-[21px] text-[#10c898] ${tint}`} />}
      {r.data === "curve" && <CurveData className={`ml-[22px] text-[#10c898] ${tint}`} />}
      {r.data === "obj" && <MeshObj className="ml-[22px] text-[#d0874a]" />}
      {r.data === "bulb" && <div className="ml-[22px]"><Bulb /></div>}
      {r.eye && (
        <div className="ml-auto flex shrink-0 gap-[4px] pr-[7px] text-[#dadada]">
          <Cursor />
          <div className="flex">{r.eye === "on" ? <Eye /> : <EyeClosed />}</div>
          <div className="flex"><Monitor /></div><Camera hole={r.sel ? "#3b5689" : "#2b2b2b"} />
          {r.ball ? <Ball /> : <div className="w-[16px]" />}
        </div>
      )}
    </div>
  );
};

const Outliner = () => (
  <div className="relative flex h-[506px] flex-col overflow-hidden rounded-[6px] bg-[#282828]">
    <div className="flex h-[26px] items-center bg-[#393939] pr-[6px] pb-px pl-[9px]">
      <Dark className="w-[31px] justify-center gap-[3px]"><TreeIcon /><Chev /></Dark>
      <Dark className="ml-[6px] w-[31px] justify-center gap-[3px]"><LayersPic /><Chev /></Dark>
      <div className="ml-[102px] flex h-[18px] w-[110px] items-center rounded-[4px] bg-[#1d1d1d] pl-[4px] shadow-[0_0_0_1px_#3d3d3d]">
        <Svg className="text-[#e0e0e0]"><circle cx="9.500" cy="6" r="4.500" strokeWidth="1.300" /><path d="M6.200 9.400L1.500 14" strokeWidth="1.300" /></Svg>
      </div>
      <Dark className="ml-auto w-[31px] justify-center gap-[3px]"><Svg className="text-[#dcdcdc]"><path d="M1.500 1.500H14.500L9.500 8V14.500L6.500 12V8Z" strokeWidth="1.300" /></Svg><Chev /></Dark>
      <Btn className="ml-[6px] w-[19px]">
        <Svg className="text-[#b4b4b4]"><path d="M9 4H1.500V7H14V8M2.500 7V14.500H12.500V8M6 10.500H9" strokeWidth="1.100" /><circle cx="12" cy="4" r="3.900" fill="#f0f0f0" stroke="none" /><path d="M12 1.800V6.200M9.800 4H14.200" stroke="#444" /></Svg>
      </Btn>
    </div>
    <div className="flex h-[20px] items-center pl-[20px] text-[#c8c8c8]">
      <div className="flex h-[19px] w-[20px] items-center justify-center rounded-[4px] border border-[#5a5a5a] bg-[#424242]"><Collection className="text-[#dcdcdc]" /></div>
      <span className="ml-[4px] whitespace-pre pt-[4px] leading-[16px]">Scene Collection</span>
    </div>
    {rows.map((r, i) => <RowView key={i} r={r} i={i} />)}
    <div className="h-[20px] bg-[#282828]" />
    <div className="h-[20px] bg-[#2c2c2c]" />
    <svg width="160" height="440" viewBox="0 0 160 440" fill="none" stroke="#6c6c6c" className="pointer-events-none absolute top-[46px] left-0">
      <path d="M69.500 75V110M73 110.500H85M49.500 195V350M50 210.500H67M50 230.500H64M50 250.500H64M50 270.500H64M50 290.500H67M50 310.500H64M50 330.500H67M50 350.500H64" />
      <path d="M89.500 116V171M89.500 130.500H106M89.500 150.500H106M89.500 170.500H106" strokeDasharray="3 2" />
    </svg>
  </div>
);

/* ---------- properties ---------- */
const PTab = ({ children, active = false, gap = false }: { children: React.ReactNode; active?: boolean; gap?: boolean }) => (
  <div className={`flex h-[26px] w-[26px] items-center justify-center rounded-l-[4px] ${active ? "bg-[#424242]" : "bg-[#2a2a2a]"} ${gap ? "mt-[10px]" : "mt-[2px]"}`}>{children}</div>
);
const PHead = ({ children, open = false, className = "" }: P & { open?: boolean }) => (
  <div className={`flex items-center bg-[#424242] pl-[7px] text-[12px] text-[#c8c8c8] ${className}`}>
    <Tri open={open} className="text-[#a8a8a8]" /><T className="ml-[6px] tracking-[-0.450px]">{children}</T>
    <div className="mr-[-2px] ml-auto"><Grip /></div>
  </div>
);
const Dot = () => (
  <svg width="8" height="8" viewBox="0 0 8 8"><circle cx="4" cy="4" r="2.500" fill="none" stroke="#dcdcdc" strokeWidth="1.300" /></svg>
);

const Properties = () => (
  <div className="flex flex-1 flex-col overflow-hidden rounded-t-[6px] bg-[#232323]">
    <div className="flex h-[25px] items-center bg-[#424242] pr-[6px] pl-[9px] text-[#dedede]">
      <Dark className="w-[31px] justify-center gap-[3px]"><PropsIcon /><Chev /></Dark>
      <SceneIcon className="ml-[13px]" /><T className="ml-[8px] w-[61px]">first steps</T>
      <svg width="4" height="8" viewBox="0 0 4 8" className="mr-[15px]"><path d="M0 0L4 4L0 8Z" fill="#2e2e2e" /></svg>
      <World /><T className="ml-[7px]">World.001</T>
      <Svg className="ml-auto text-[#909090]"><path d="M9.500 1.500L14.500 6.500L12.500 7L10.500 9L10 12.500L3.500 6L7 5.500L9 3.500ZM6.500 9.500L1.500 14.500" strokeWidth="1.100" /></Svg>
    </div>
    <div className="flex flex-1">
      <div className="flex w-[28px] flex-col items-end pt-[7px]">
        <PTab><Svg className="text-[#d0d0d0]"><path d="M3.500 1V8" strokeWidth="1.300" /><path d="M1.500 8H5.500L6 12.500C6 15.500 1 15.500 1 12.500Z" fill="currentColor" stroke="none" /><path d="M12 7V15M9.500 1.500V5L12 7L14.500 5V1.500" strokeWidth="2" /></Svg></PTab>
        <PTab gap><Svg className="text-[#d0d0d0]"><path d="M1.500 4.500H14.500V14H1.500ZM4 4V2H8V4" strokeWidth="1.200" /><path d="M3.500 7.500H9.500M3.500 9.500H9.500M3.500 11.500H9.500" strokeWidth="0.900" /><path d="M11 4.500V14M13 7V12" strokeWidth="1.600" /></Svg></PTab>
        <PTab><Svg className="text-[#c8c8c8]"><path d="M1 2H15V7H13V5H3V7H1Z" fill="currentColor" stroke="none" /><path d="M3.500 5.500V14.500H12.500V5.500" strokeWidth="1.100" /><path d="M4.500 13.500L7.500 8.500L10.500 13.500Z" fill="currentColor" stroke="none" /></Svg></PTab>
        <PTab><LayersPic className="text-[#c8c8c8]" /></PTab>
        <PTab><SceneIcon className="text-[#d0d0d0]" /></PTab>
        <PTab active><World className="text-[#e8606c]" /></PTab>
        <PTab gap><ObjMode className="text-[#d0874a]" /></PTab>
        <PTab><Svg className="text-[#6b93d0]"><path d="M10.500 2.200A6.300 6.300 0 1 0 14 7" strokeWidth="1.100" opacity="0.700" /><circle cx="8" cy="8.500" r="3.200" fill="currentColor" stroke="none" /><circle cx="13.500" cy="3" r="1.900" fill="currentColor" stroke="none" opacity="0.700" /></Svg></PTab>
        <PTab><Svg className="text-[#6b93d0]"><circle cx="6.200" cy="9.800" r="4.900" strokeWidth="1.300" /><circle cx="6.200" cy="9.800" r="2.200" strokeWidth="1.300" /><path d="M2.800 6.300L11.500 1.800C13.500 1 15.200 3 14.200 5L10.600 12" strokeWidth="1.300" /><circle cx="12.400" cy="3.800" r="1" fill="currentColor" stroke="none" /></Svg></PTab>
        <PTab><Axes w={1.200} className="text-[#10c898]" /></PTab>
        <PTab gap>
          <Svg className="text-[#c05a66]"><rect x="1.500" y="1.500" width="13" height="13" />
            {[0, 1, 2, 3].map((a) => [0, 1, 2, 3].map((b) => (a + b) % 2 === 0 && <rect key={`${a}${b}`} x={2 + a * 3} y={2 + b * 3} width="3" height="3" fill="currentColor" stroke="none" />))}
          </Svg>
        </PTab>
      </div>
      <div className="flex flex-1 flex-col bg-[#424242]">
        <div className="mt-[9px] mr-[6px] ml-[8px] flex h-[19px] items-stretch overflow-hidden rounded-[4px] bg-[#1d1d1d] shadow-[0_1px_0_#363636]">
          <div className="flex w-[31px] items-center justify-center gap-[3px] border-r border-[#3d3d3d] bg-[#2a2a2a] text-[#dcdcdc]"><World /><Chev /></div>
          <div className="flex flex-1 items-center pl-[8px] text-[#e3e3e3]"><T>World.001</T></div>
          <div className="flex w-[20px] items-center justify-center border-r border-[#444] bg-[#585858]"><Svg className="text-[#8c8c8c]"><path d="M8 1.500L14 3.500C14.500 9 12 13 8 14.500C4 13 1.500 9 2 3.500Z" /></Svg></div>
          <div className="flex w-[20px] items-center justify-center border-r border-[#444] bg-[#585858]"><Copy /></div>
          <div className="flex w-[19px] items-center justify-center bg-[#585858]"><Cross className="text-[#e6e6e6]" /></div>
        </div>
        <PHead open className="mt-[11px] h-[21px] pb-px">Surface</PHead>
        <div className="flex h-[133px] flex-col bg-[#383838] pt-[9px] pr-[6px] pl-[9px] text-[#dedede]">
          <div className="flex h-[18px] items-center rounded-[3px] bg-[#5077b5] pl-[3px] text-white shadow-[0_1px_1px_rgba(0,0,0,0.3)]">
            <Svg><rect x="3" y="1" width="8" height="5.500" rx="1.500" fill="currentColor" stroke="none" /><rect x="1" y="9" width="8" height="5.500" rx="1.500" fill="currentColor" stroke="none" /><path d="M12 3H14.500V12H11" strokeWidth="1.100" /></Svg>
            <T className="flex-1 pr-[4px] text-center">Use Nodes</T>
          </div>
          <div className="mt-[17px] flex h-[19px] items-center"><T className="w-[210px] pt-[3px] text-right">Surface</T>
            <Dark className="ml-[16px] flex-1 justify-between pr-[6px] pl-[6px]"><T className="pt-[3px]">Background</T><Dot /></Dark></div>
          <div className="mt-[17px] flex h-[19px] items-center"><T className="w-[210px] pt-[3px] text-right">Color</T>
            <div className="ml-[17px] h-[18px] flex-1 rounded-l-[4px] bg-[#0a464d]" /><Dark className="w-[20px] justify-center rounded-l-none!"><Dot /></Dark></div>
          <div className="mt-[6px] flex h-[19px] items-center"><T className="w-[210px] pt-[3px] text-right">Strength</T>
            <Btn className="ml-[17px] flex-1 rounded-r-none!"><T className="pr-[2px] tracking-[-0.100px]">1.000</T></Btn><Dark className="w-[20px] justify-center rounded-l-none!"><Dot /></Dark></div>
        </div>
        <PHead className="h-[27px] pb-px">Volume</PHead>
        <PHead open className="h-[21px] pb-px">Viewport Display</PHead>
        <div className="flex h-[36px] items-center bg-[#383838] pr-[13px] text-[#dedede]">
          <T className="w-[213px] text-right">Color</T><div className="ml-[9px] h-[18px] w-[211px] rounded-[3px] bg-[#238a9a] shadow-[0_1px_1px_rgba(0,0,0,0.3)]" />
          <div className="ml-auto size-[4px] rounded-full bg-[#dcdcdc]" />
        </div>
        <PHead className="h-[27px] pb-px">Custom Properties</PHead>
      </div>
    </div>
  </div>
);

/* ---------- status bar ---------- */
const Mouse = ({ side }: { side: "l" | "m" | "r" }) => (
  <svg width="12" height="15" viewBox="0 0 12 15" fill="none" className="text-[#a8a8a8]">
    <rect x="1" y="0.800" width="10" height="13.400" rx="3.500" stroke="currentColor" strokeWidth="1.100" />
    {side === "l" && <path d="M0.500 4A3.500 3.500 0 0 1 5 0.500V7.500H0.500Z" fill="currentColor" />}
    {side === "m" && <rect x="4.700" y="2.500" width="2.600" height="5.500" fill="currentColor" />}
    {side === "r" && <path d="M7 0.500A3.500 3.500 0 0 1 11.500 4V7.500H7Z" fill="currentColor" />}
  </svg>
);

const N = ({ children }: P) => <span className="tracking-[0px]">{children}</span>;

export default function App() {
  return (
    <div className="flex h-[985px] w-[1677px] flex-col overflow-hidden bg-[#1f1f1f] font-['DejaVu_Sans',sans-serif] text-[11px] tracking-[-0.580px]">
      <TopBar />
      <div className="flex h-[940px] pl-px">
        <Viewport />
        <div className="ml-[3px] flex flex-1 flex-col gap-[3px]">
          <Outliner />
          <Properties />
        </div>
      </div>
      <div className="flex h-[19px] items-center bg-[#303030] text-[#a4a4a4]">
        <div className="ml-[11px]"><Mouse side="l" /></div>
        <div className="ml-[224px]"><Mouse side="m" /></div>
        <div className="ml-[225px]"><Mouse side="r" /></div>
        <span className="ml-[481px] whitespace-pre pt-[3px]">
          Scene Collection | Orientation point bottom deformed | Verts:<N>5,175</N> | Faces:<N>2,541</N> | Tris:<N>2,541</N> | Objects:<N>1/11</N> | Mem: <N>72.9</N> MiB | <N>2.83.1</N>
        </span>
      </div>
    </div>
  );
}
